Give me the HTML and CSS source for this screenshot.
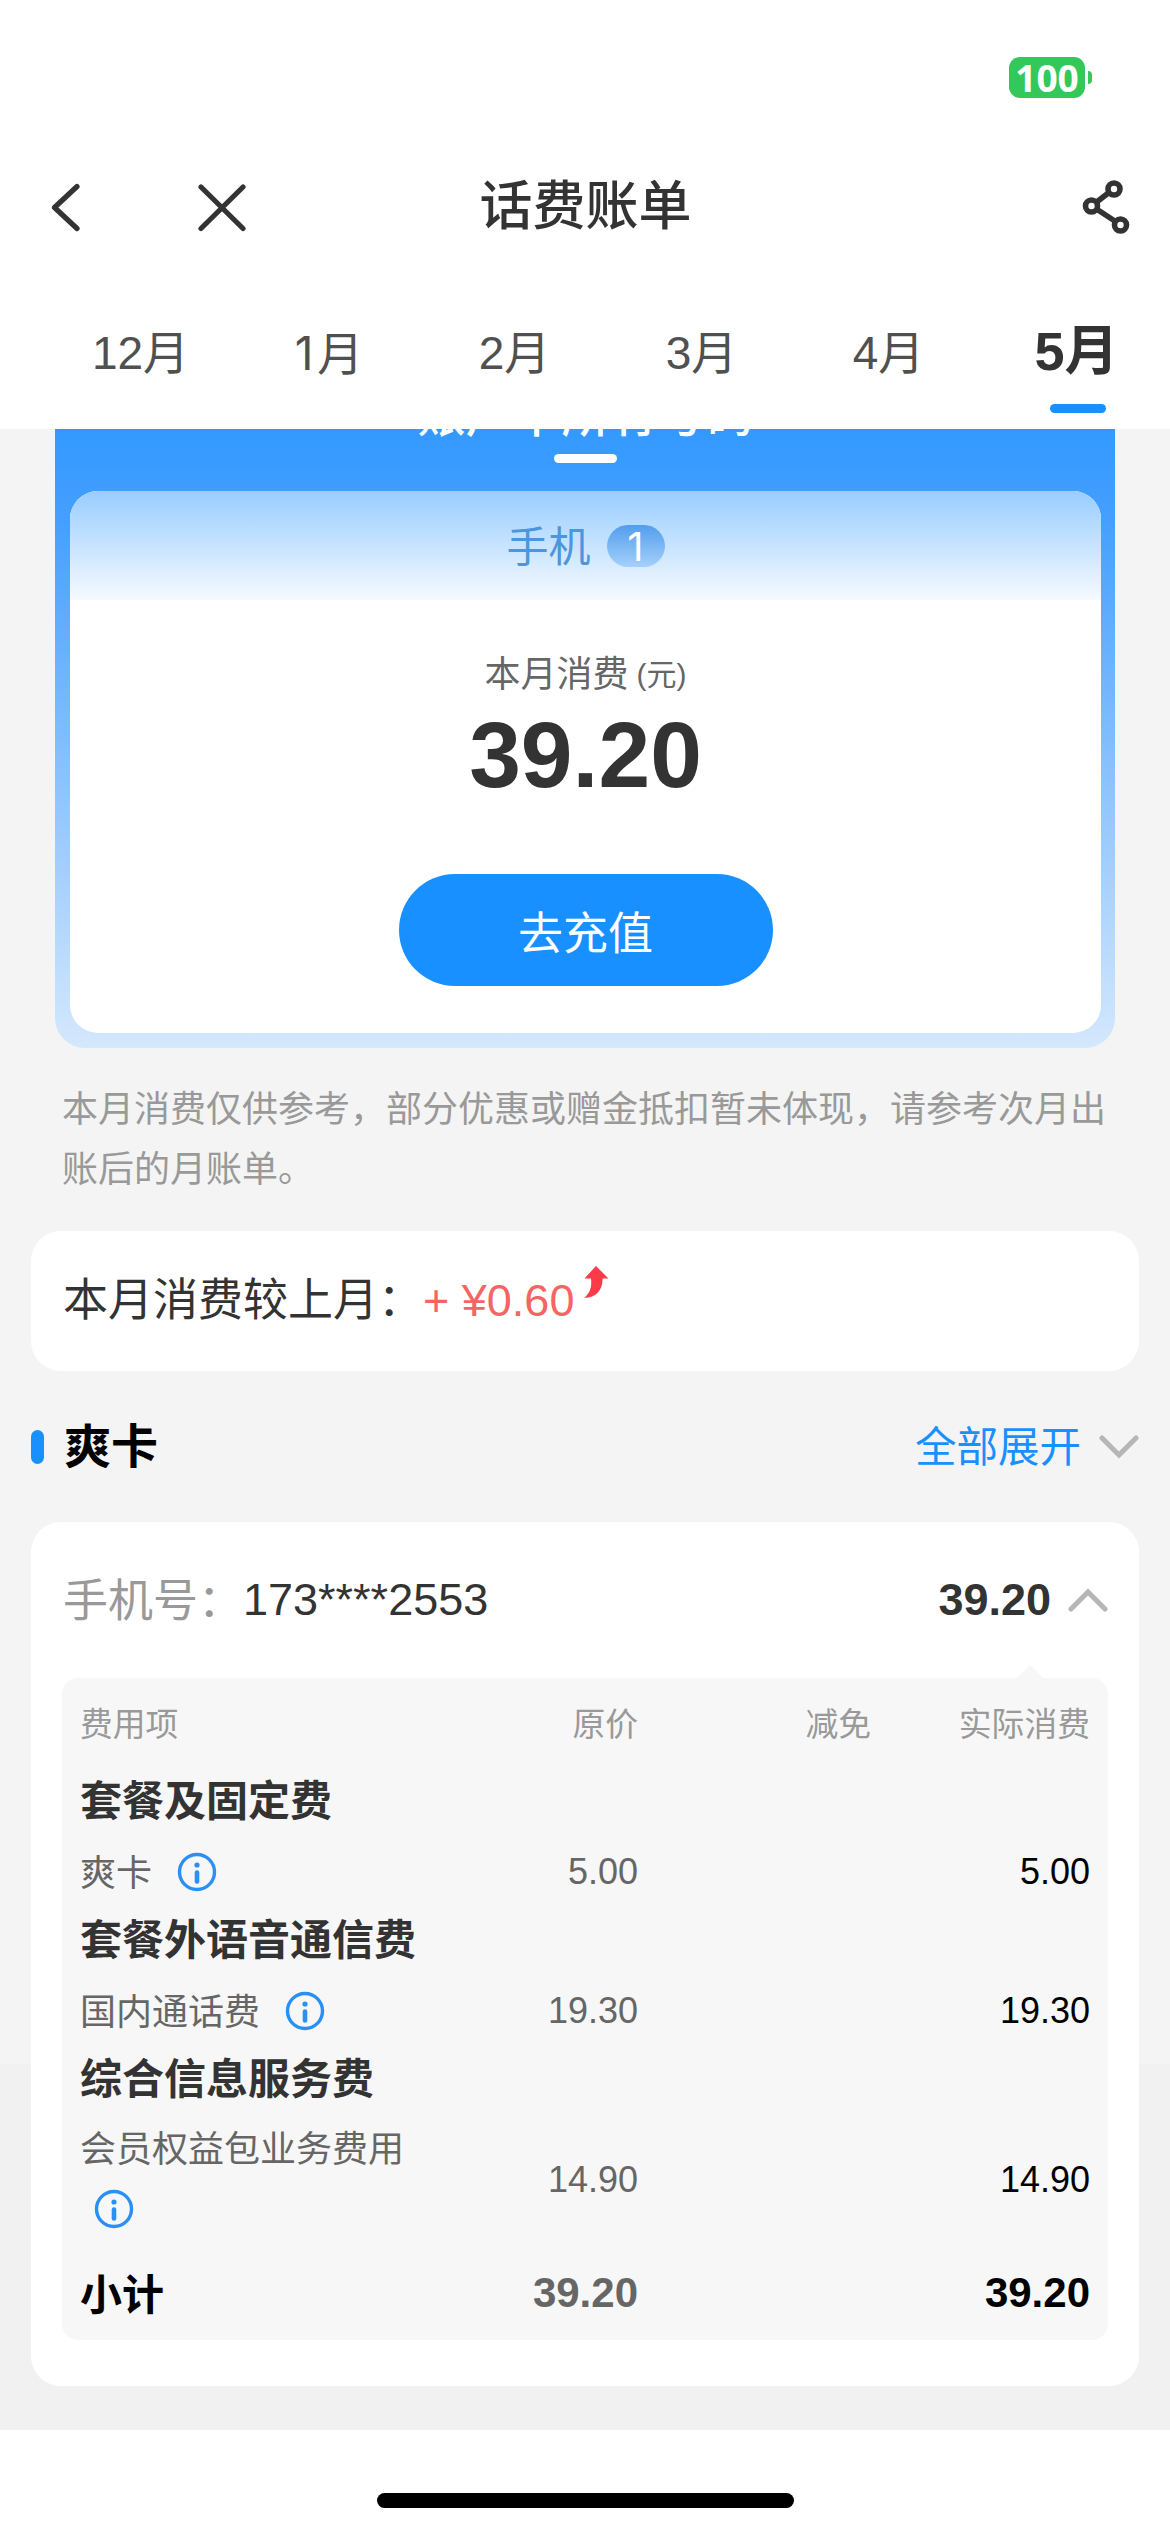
FILE: index.html
```html
<!DOCTYPE html>
<html lang="zh-CN">
<head>
<meta charset="utf-8">
<title>话费账单</title>
<link rel="stylesheet" href="styles.css">
</head>
<body>
<svg class="defs" aria-hidden="true">
  <symbol id="info" viewBox="0 0 40 40">
    <circle cx="20" cy="20" r="17.500" fill="none" stroke="#2a90f5" stroke-width="3.400"/>
    <circle cx="20" cy="13" r="2.600" fill="#2a90f5"/>
    <path d="M20 20.500V29.500" stroke="#2a90f5" stroke-width="4.600" stroke-linecap="round"/>
  </symbol>
</svg>

<div class="status">
  <div class="battery">100</div>
  <div class="battery-tip"></div>
</div>

<header class="nav">
  <div class="nav-left">
    <svg width="30" height="50" viewBox="0 0 30 50"><path d="M27 4.500L4.500 25.500L27 46.500" fill="none" stroke="#333" stroke-width="5.200" stroke-linecap="round" stroke-linejoin="round"/></svg>
    <svg width="50" height="50" viewBox="0 0 50 50"><path d="M4 5L46 46.500M46 5L4 46.500" fill="none" stroke="#333" stroke-width="5.200" stroke-linecap="round"/></svg>
  </div>
  <h1>话费账单</h1>
  <svg class="share" width="48" height="56" viewBox="0 0 48 56"><g fill="none" stroke="#333" stroke-width="5.600"><circle cx="32" cy="10" r="6"/><circle cx="9.500" cy="27" r="6"/><circle cx="38.500" cy="46" r="6"/><path d="M14 23.500L27 13.500M14.500 30L33.500 42.500"/></g></svg>
</header>

<nav class="tabs">
  <span>12月</span><span><em>1</em>月</span><span>2月</span><span>3月</span><span>4月</span><span class="active">5月</span>
</nav>

<main>
  <section class="account">
    <div class="account-title">账户下所有号码</div>
    <div class="account-mark"></div>
    <div class="summary">
      <div class="summary-head"><span>手机</span><b>1</b></div>
      <div class="summary-body">
        <div class="label">本月消费<small>(元)</small></div>
        <div class="total">39.20</div>
        <button>去充值</button>
      </div>
    </div>
  </section>

  <p class="note">本月消费仅供参考，部分优惠或赠金抵扣暂未体现，请参考次月出账后的月账单。</p>

  <section class="compare">
    <span>本月消费较上月：</span><span class="diff">+ ¥0.60</span>
    <svg width="26" height="34" viewBox="0 0 26 34"><path d="M13 1L25.500 13.500H19.500C20 24 14 32.500 1 33C7 28 9 22 8 13.500H1.500Z" fill="#fd3b48"/></svg>
  </section>

  <div class="section-title">
    <i></i><h2>爽卡</h2><span>全部展开</span>
    <svg width="40" height="26" viewBox="0 0 40 26"><path d="M3 4L20 21L37 4" fill="none" stroke="#b6b6b6" stroke-width="5" stroke-linecap="round"/></svg>
  </div>

  <section class="bill">
    <div class="phone">
      <span class="phone-label">手机号：</span><span class="number">173****2553</span><b>39.20</b>
      <svg width="40" height="26" viewBox="0 0 40 26"><path d="M3 22L20 5L37 22" fill="none" stroke="#b6b6b6" stroke-width="5" stroke-linecap="round"/></svg>
    </div>
    <div class="detail">
      <div class="row head"><span>费用项</span><span>原价</span><span>减免</span><span>实际消费</span></div>
      <h3>套餐及固定费</h3>
      <div class="row"><span><span class="name">爽卡</span><svg class="info"><use href="#info"/></svg></span><span>5.00</span><span></span><span class="paid">5.00</span></div>
      <h3>套餐外语音通信费</h3>
      <div class="row"><span><span class="name">国内通话费</span><svg class="info"><use href="#info"/></svg></span><span>19.30</span><span></span><span class="paid">19.30</span></div>
      <h3>综合信息服务费</h3>
      <div class="row tall"><span>会员权益包业务费用<br><svg class="info wrapped"><use href="#info"/></svg></span><span>14.90</span><span></span><span class="paid">14.90</span></div>
      <div class="row sum"><span class="paid"><span class="name">小计</span></span><span>39.20</span><span></span><span class="paid">39.20</span></div>
    </div>
  </section>
</main>

<footer><div class="home"></div></footer>
</body>
</html>
```
FILE: styles.css
```css
* { box-sizing: border-box; }
body {
  margin: 0;
  width: 1170px;
  height: 2532px;
  display: flex;
  flex-direction: column;
  overflow: hidden;
  background: #fff;
  color: #333;
  font-family: "Liberation Sans", "Noto Sans CJK SC", sans-serif;
}
h1, h2, h3, p { margin: 0; }
svg { display: block; flex: none; }
.defs { position: absolute; width: 0; height: 0; }

.status { height: 156px; padding: 57px 78px 0 0; display: flex; justify-content: flex-end; }
.battery {
  width: 76px; height: 41px; border-radius: 11px; background: #34c759; color: #fff;
  font: 700 37px/41px "Open Sans", sans-serif; text-align: center;
}
.battery-tip { width: 4px; height: 13px; margin: 14px 0 0 3px; border-radius: 0 4px 4px 0; background: #34c759; }

.nav { height: 102px; display: grid; grid-template-columns: 1fr auto 1fr; align-items: center; padding: 0 40px 0 50px; }
.nav-left { display: flex; gap: 117px; }
.nav h1 { font-size: 53px; font-weight: 500; line-height: 102px; padding-top: 2px; margin: -2px 0 0 -9px; }
.share { justify-self: end; }

.tabs { height: 171px; display: flex; padding: 0 0 0 47px; }
.tabs span { width: 187px; flex: none; text-align: center; font-size: 46px; line-height: 190px; color: #505050; }
.tabs em { font-family: "Inter", sans-serif; font-style: normal; margin: 0 4px 0 3px; }
.tabs .active { color: #333; font-size: 54px; font-weight: 700; line-height: 186px; display: flex; flex-direction: column; align-items: center; padding-left: 2px; }
.tabs .active::after { content: ""; width: 56px; height: 9px; border-radius: 5px; background: #1990ff; margin: -40px 0 0 3px; flex: none; }

main { height: 2001px; overflow: hidden; background: linear-gradient(#f4f4f4 1635px, #f1f1f1 1635px); }
.account { width: 1060px; height: 619px; margin: 0 auto; padding: 0 14px 15px 15px; border-radius: 0 0 30px 30px; background: linear-gradient(#3399ff, #469ffe 15%, #d4e8fd); display: flex; flex-direction: column; }
.account-title { height: 80px; line-height: 84px; margin-top: -55px; text-align: center; font-size: 48px; font-weight: 500; color: #fff; }
.account-mark { width: 63px; height: 9px; border-radius: 5px; background: #fff; align-self: center; margin-bottom: 28px; }
.summary { flex: 1; border-radius: 28px; overflow: hidden; background: #fff; }
.summary-head { height: 109px; display: flex; align-items: center; justify-content: center; gap: 16px; font-size: 42px; color: #4b96dc; background: linear-gradient(#99cdff, #f5faff); }
.summary-head span { padding-bottom: 5px; }
.summary-head b { width: 58px; height: 42px; border-radius: 21px; color: #fff; font: 400 40px/43px "Inter", sans-serif; text-align: center; background: linear-gradient(#529eec, #a5d0fc); }
.summary-body { display: flex; flex-direction: column; align-items: center; }
.label { margin-top: 48px; height: 53px; line-height: 54px; font-size: 36px; color: #666; }
.label small { font-size: 30px; margin-left: 8px; vertical-align: 2px; }
.total { height: 108px; line-height: 109px; font-size: 93px; font-weight: 700; }
button { width: 374px; height: 112px; margin-top: 65px; padding: 0; border: 0; border-radius: 56px; background: #1990ff; color: #fff; font: 45px/109px "Noto Sans CJK SC", sans-serif; }

.note { margin: 28px 62px 0; font-size: 36px; line-height: 60px; color: #999; font-family: "Noto Sans CJK SC", sans-serif; }
.compare { height: 140px; margin: 35px 31px 0; padding-left: 32px; border-radius: 30px; background: #fff; display: flex; align-items: center; font-size: 45px; line-height: 142px; }
.diff { color: #f66464; white-space: pre; }
.compare svg { margin: -38px 0 0 9px; }
.section-title { height: 151px; margin: 0 31px; display: flex; align-items: center; }
.section-title i { width: 13px; height: 34px; border-radius: 7px; background: #1990ff; margin-right: 20px; }
.section-title h2 { color: #000; font-size: 47px; font-weight: 700; line-height: 151px; }
.section-title span { margin-left: auto; margin-right: 18px; padding-bottom: 6px; font-size: 41.500px; color: #1990ff; }

.bill { height: 864px; margin: 0 31px; padding: 0 31px; background: #fff; border-radius: 30px; }
.phone { height: 156px; padding-left: 1px; display: flex; align-items: center; font-size: 45px; }
.phone-label { color: #999; width: 180px; padding-bottom: 6px; white-space: nowrap; }
.phone b { margin-left: auto; margin-right: 17px; }
.detail { position: relative; height: 662px; padding: 12px 18px; background: #f7f7f7; border-radius: 16px; }
.detail::before { content: ""; position: absolute; right: 65px; top: -13px; border: solid transparent; border-width: 0 13px 13px; border-bottom-color: #f7f7f7; }
.row { height: 69px; display: grid; grid-template-columns: 340px 218px 233px 219px; align-items: center; text-align: right; font-size: 36px; color: #666; }
.row > :first-child { text-align: left; display: flex; align-items: center; white-space: nowrap; }
.row .name { padding-bottom: 4px; }
.row.head { height: 77px; padding-bottom: 14px; font-size: 32.800px; color: #999; }
.detail h3 { height: 70px; line-height: 70px; font-size: 42px; font-weight: 700; }
.info { width: 40px; height: 40px; margin-left: 25px; }
.row.tall { height: 130px; }
.row.tall > :first-child { display: block; line-height: 60px; }
.info.wrapped { margin: 9px 0 11px 14px; }
.row.sum { height: 96px; font-size: 42px; font-weight: 700; }
.row .paid { color: #000; }

footer { height: 102px; padding-top: 63px; }
.home { width: 417px; height: 15px; border-radius: 8px; margin: 0 auto; background: #000; }
```
